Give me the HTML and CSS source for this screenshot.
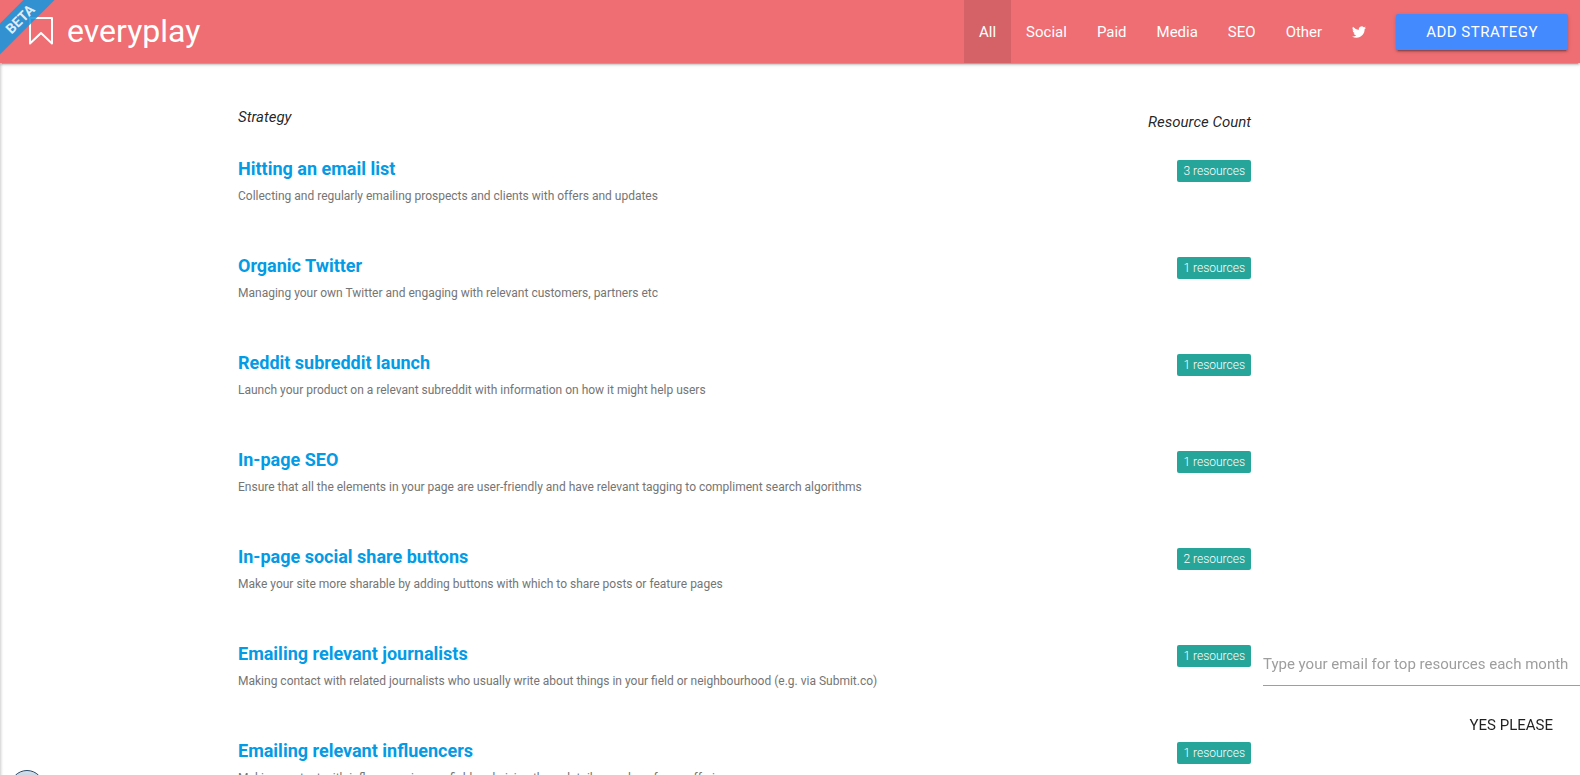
FILE: index.html
```html
<!DOCTYPE html>
<html lang="en">
<head>
  <meta charset="UTF-8" />
  <title>everyplay</title>
  <meta name="viewport" content="width=device-width, initial-scale=1.0" />
  <link rel="stylesheet" href="styles.css">
</head>
<body>
  <nav>
    <a href="#" class="logo">
      <svg width="24" height="28" viewBox="0 0 24 28" fill="none" stroke="#fff" stroke-width="2" stroke-linejoin="round">
        <path d="M1 1h22v25.500l-11-10.500L1 26.500z" />
      </svg>
      everyplay
    </a>
    <ul>
      <li class="active"><a href="#">All</a></li>
      <li><a href="#">Social</a></li>
      <li><a href="#">Paid</a></li>
      <li><a href="#">Media</a></li>
      <li><a href="#">SEO</a></li>
      <li><a href="#">Other</a></li>
      <li>
        <a href="#" aria-label="Twitter">
          <svg width="14" height="12" viewBox="0 2 24 20" fill="#fff">
            <path d="M23.950 4.600a10 10 0 0 1-2.800.8 4.900 4.900 0 0 0 2.100-2.700c-.9.500-2 .9-3.100 1.200a4.900 4.900 0 0 0-8.400 4.500A14 14 0 0 1 1.700 3.200a4.900 4.900 0 0 0 1.500 6.500 4.900 4.900 0 0 1-2.200-.6v.1a4.900 4.900 0 0 0 3.900 4.800 5 5 0 0 1-2.200.1 4.900 4.900 0 0 0 4.600 3.400A9.900 9.900 0 0 1 0 19.500a14 14 0 0 0 7.600 2.200c9 0 14-7.500 14-14v-.6a10 10 0 0 0 2.400-2.500z" />
          </svg>
        </a>
      </li>
    </ul>
    <button type="button" class="add-btn">Add Strategy</button>
    <div class="ribbon"><span>BETA</span></div>
  </nav>

  <main>
    <div class="list-head">
      <em>Strategy</em>
      <em class="count-head">Resource Count</em>
    </div>

    <div class="strategy">
      <div>
        <h2><a href="#">Hitting an email list</a></h2>
        <p>Collecting and regularly emailing prospects and clients with offers and updates</p>
      </div>
      <span class="badge">3 resources</span>
    </div>

    <div class="strategy">
      <div>
        <h2><a href="#">Organic Twitter</a></h2>
        <p>Managing your own Twitter and engaging with relevant customers, partners etc</p>
      </div>
      <span class="badge">1 resources</span>
    </div>

    <div class="strategy">
      <div>
        <h2><a href="#">Reddit subreddit launch</a></h2>
        <p>Launch your product on a relevant subreddit with information on how it might help users</p>
      </div>
      <span class="badge">1 resources</span>
    </div>

    <div class="strategy">
      <div>
        <h2><a href="#">In-page SEO</a></h2>
        <p>Ensure that all the elements in your page are user-friendly and have relevant tagging to compliment search algorithms</p>
      </div>
      <span class="badge">1 resources</span>
    </div>

    <div class="strategy">
      <div>
        <h2><a href="#">In-page social share buttons</a></h2>
        <p>Make your site more sharable by adding buttons with which to share posts or feature pages</p>
      </div>
      <span class="badge">2 resources</span>
    </div>

    <div class="strategy">
      <div>
        <h2><a href="#">Emailing relevant journalists</a></h2>
        <p>Making contact with related journalists who usually write about things in your field or neighbourhood (e.g. via Submit.co)</p>
      </div>
      <span class="badge">1 resources</span>
    </div>

    <div class="strategy">
      <div>
        <h2><a href="#">Emailing relevant influencers</a></h2>
        <p>Making contact with influencers in your field and giving them detail, samples of your offering</p>
      </div>
      <span class="badge">1 resources</span>
    </div>
  </main>

  <form class="signup">
    <input type="email" aria-label="Email" placeholder="Type your email for top resources each month" />
    <button type="submit">Yes please</button>
  </form>

  <a href="#" class="bubble" aria-label="Help"></a>
</body>
</html>
```

FILE: styles.css
```css
* {
  margin: 0;
  padding: 0;
  box-sizing: border-box;
  font-family: Roboto, sans-serif;
}

body {
  background-color: #fff;
  color: rgba(0, 0, 0, 0.87);
  font-size: 15px;
  box-shadow: inset 3px 0 3px -2px rgba(0, 0, 0, 0.2);
}

a {
  text-decoration: none;
}

nav {
  position: relative;
  display: flex;
  align-items: center;
  height: 63px;
  padding: 0 12px 0 29px;
  background-color: #ee6e73;
  box-shadow: 0 2px 2px 0 rgba(0, 0, 0, 0.14), 0 1px 5px 0 rgba(0, 0, 0, 0.12), 0 3px 1px -2px rgba(0, 0, 0, 0.2);
}

nav .logo {
  display: flex;
  align-items: center;
  gap: 14px;
  margin-right: auto;
  padding-bottom: 2px;
  color: #fff;
  font-size: 32px;
}

nav ul {
  list-style: none;
  display: flex;
  margin-right: 15px;
}

nav ul li a {
  display: flex;
  align-items: center;
  height: 63px;
  padding: 0 15px;
  color: #fff;
}

nav ul li.active,
nav ul li:hover {
  background-color: rgba(0, 0, 0, 0.1);
}

button {
  border: none;
  font-size: 15px;
  text-transform: uppercase;
  cursor: pointer;
}

.add-btn {
  height: 36px;
  padding: 0 30px;
  border-radius: 2px;
  background-color: #448aff;
  color: #fff;
  letter-spacing: 0.5px;
  box-shadow: 0 2px 2px 0 rgba(0, 0, 0, 0.14), 0 1px 5px 0 rgba(0, 0, 0, 0.12), 0 3px 1px -2px rgba(0, 0, 0, 0.2);
}

/* corner ribbon */
.ribbon {
  position: absolute;
  top: 0;
  left: 0;
  width: 63px;
  height: 63px;
  overflow: hidden;
}

.ribbon span {
  position: absolute;
  top: 8px;
  left: -40px;
  width: 120px;
  line-height: 22px;
  background-color: rgba(17, 153, 226, 0.85);
  color: rgba(255, 255, 255, 0.85);
  font-size: 14px;
  font-weight: 700;
  text-align: center;
  transform: rotate(-45deg);
}

main {
  width: 70%;
  margin: 0 auto;
  padding: 43px 92px 0 1px;
}

.list-head {
  display: flex;
  justify-content: space-between;
  height: 52px;
  line-height: 22px;
}

.count-head {
  margin-top: 5px;
}

.strategy {
  display: flex;
  justify-content: space-between;
  align-items: flex-start;
  height: 97px;
}

.strategy h2 {
  font-size: 18px;
  font-weight: 700;
  line-height: 22px;
}

.strategy h2 a {
  color: #039be5;
}

.strategy p {
  margin-top: 6px;
  color: #757575;
  font-size: 12px;
  line-height: 20px;
}

.badge {
  margin-top: 2px;
  padding: 0 6px;
  border-radius: 2px;
  background-color: #26a69a;
  color: #fff;
  font-size: 12px;
  font-weight: 300;
  line-height: 22px;
}

.signup {
  position: fixed;
  right: 0;
  bottom: 32px;
  width: 317px;
  display: flex;
  flex-direction: column;
  align-items: flex-end;
  gap: 21px;
}

.signup input {
  width: 100%;
  height: 45px;
  padding-top: 2px;
  border: none;
  border-bottom: 1px solid #9e9e9e;
  outline: none;
  background-color: transparent;
  font-size: 15px;
}

.signup input::placeholder {
  color: #9e9e9e;
}

.signup button {
  height: 36px;
  padding: 0 27px;
  background-color: transparent;
  color: rgba(0, 0, 0, 0.87);
}

.bubble {
  position: fixed;
  left: 10px;
  bottom: -29px;
  width: 34px;
  height: 34px;
  border: 1px solid #2c4a6b;
  border-radius: 50%;
  background: linear-gradient(#d5e0ea, #7d9fbd);
}
```
